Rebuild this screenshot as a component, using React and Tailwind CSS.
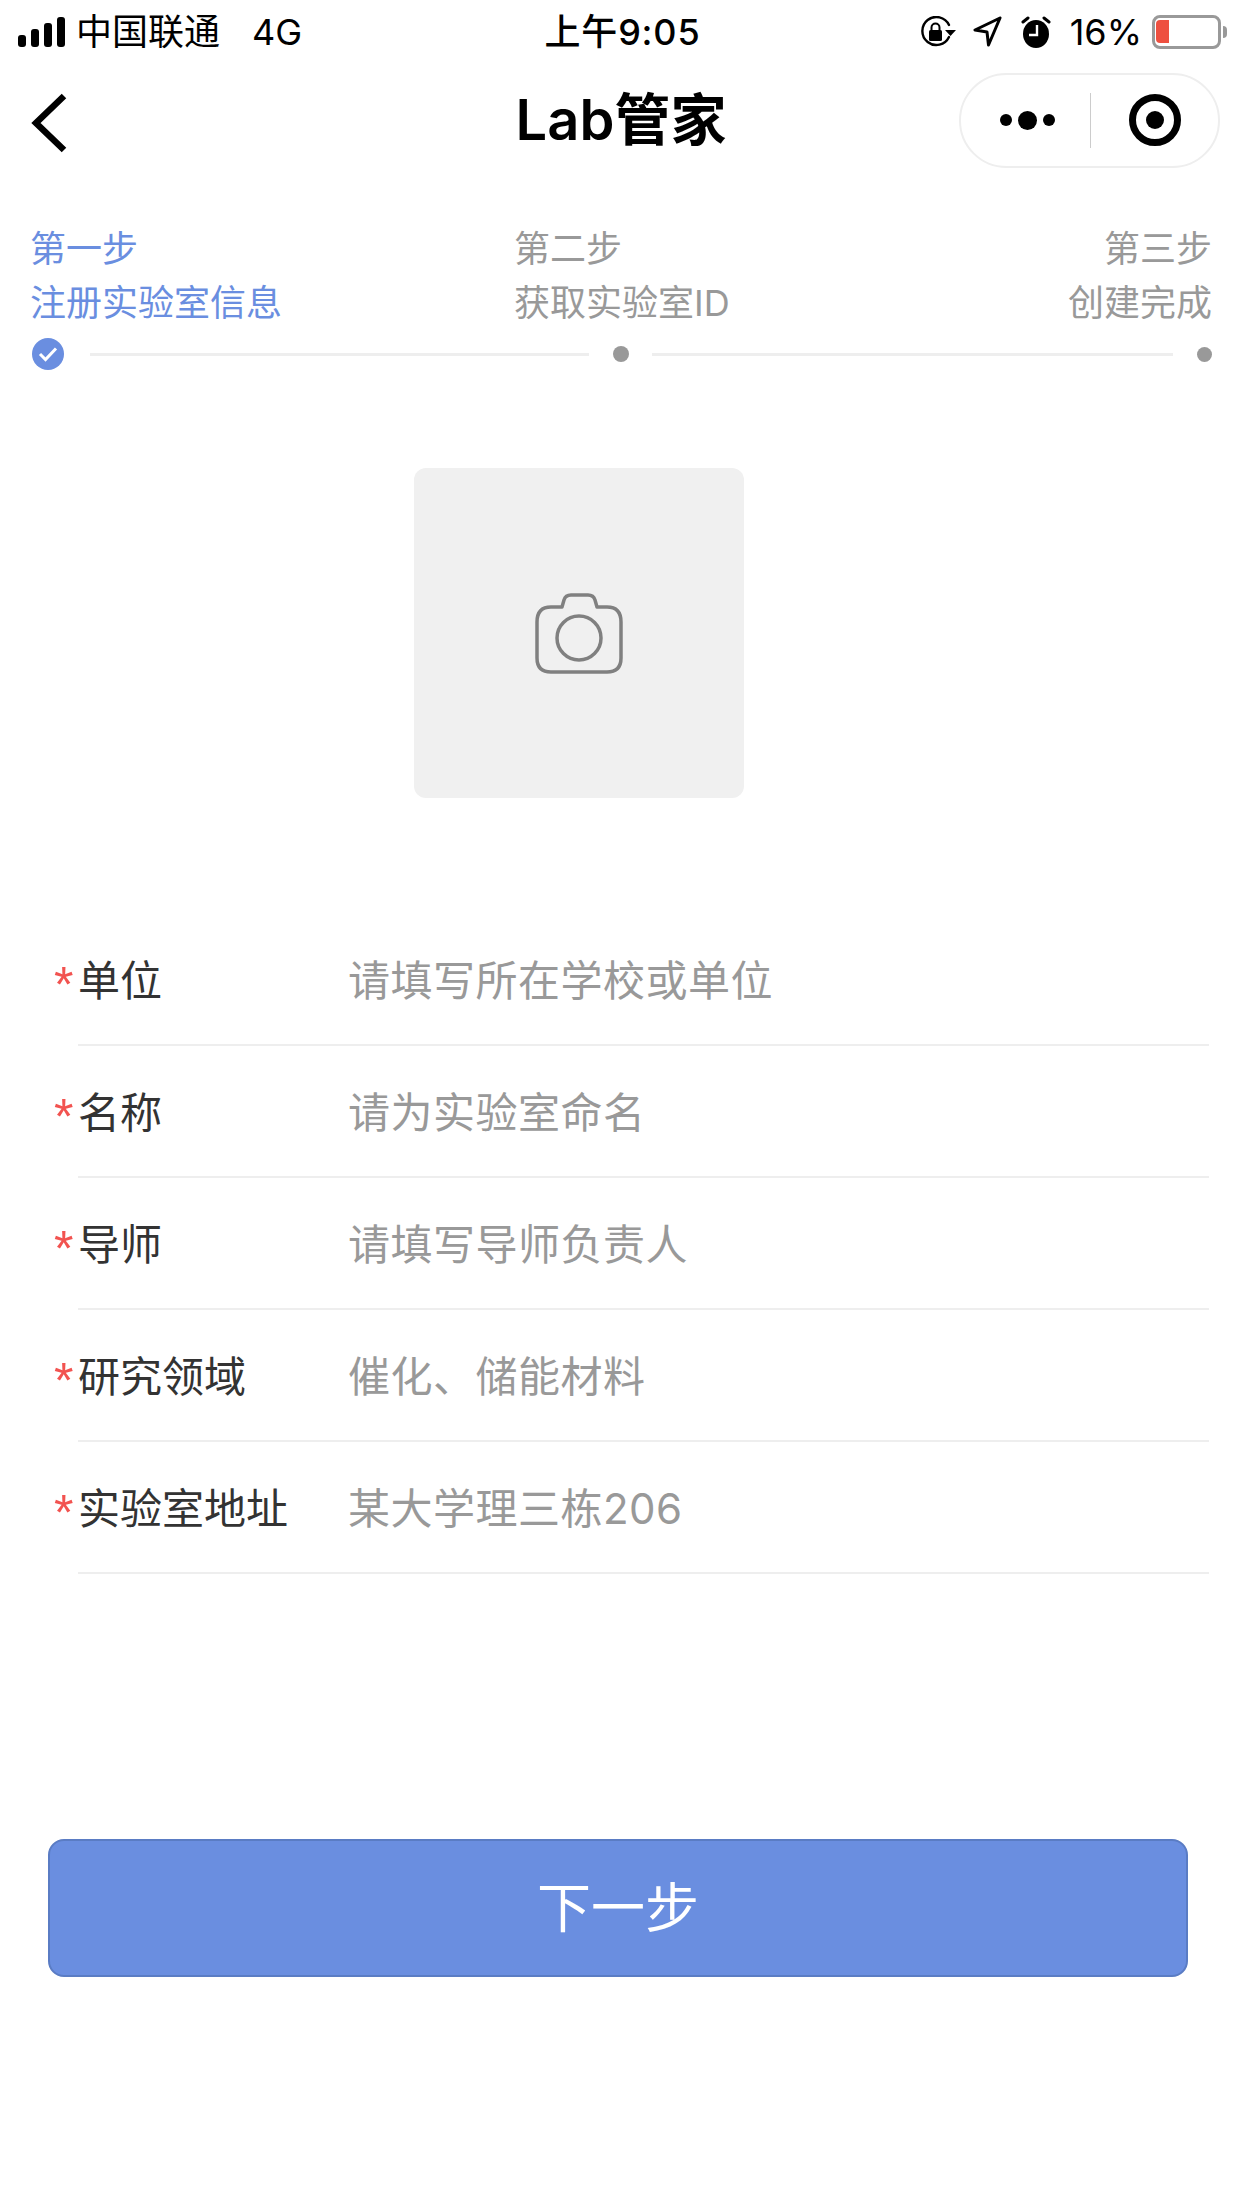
import React from "react";

const fontStack = { fontFamily: '"Inter", "Noto Sans CJK SC", sans-serif' };

const rows = [
  { label: "单位", hint: "请填写所在学校或单位" },
  { label: "名称", hint: "请为实验室命名" },
  { label: "导师", hint: "请填写导师负责人" },
  { label: "研究领域", hint: "催化、储能材料" },
  { label: "实验室地址", hint: "某大学理三栋206" },
];

function SignalBars() {
  return (
    <svg width="47" height="30" viewBox="0 0 47 30" fill="#000">
      <rect x="0" y="18" width="8" height="12" rx="3" />
      <rect x="13" y="12" width="8" height="18" rx="3" />
      <rect x="26" y="6" width="8" height="24" rx="3" />
      <rect x="39" y="0" width="8" height="30" rx="3" />
    </svg>
  );
}

function RotationLock() {
  return (
    <svg width="36" height="32" viewBox="0 0 36 32" fill="none">
      <path d="M29 21A14 14 0 1 1 29 9" stroke="#000" strokeWidth="2.400" strokeLinecap="round" />
      <path d="M25 14h11l-5.500 6z" fill="#000" />
      <rect x="9" y="14" width="13" height="11" rx="1.500" fill="#000" />
      <path d="M11.500 14v-2.500a4 4 0 0 1 8 0V14" stroke="#000" strokeWidth="2" />
    </svg>
  );
}

function LocationArrow() {
  return (
    <svg width="29" height="31" viewBox="0 0 29 31" fill="none">
      <path d="M27 2 2 14l12 2 1.500 13z" stroke="#000" strokeWidth="3" strokeLinejoin="round" />
    </svg>
  );
}

function AlarmClock() {
  return (
    <svg width="30" height="32" viewBox="0 0 30 32" fill="none">
      <ellipse cx="15" cy="18" rx="13" ry="14" fill="#000" />
      <path d="M2 6 7 2M28 6l-5-4" stroke="#000" strokeWidth="3" strokeLinecap="round" />
      <path d="M16 9v10H8" stroke="#fff" strokeWidth="2.400" />
    </svg>
  );
}

function Battery() {
  return (
    <div className="flex items-center">
      <div className="flex h-[34px] w-[69px] items-center rounded-[8px] border-[3px] border-[#999] pl-[1px]">
        <div className="h-[23px] w-[13px] rounded-l-[4px] bg-[#ee5040]" />
      </div>
      <div className="ml-[2px] h-[12px] w-[4px] rounded-r-full bg-[#999]" />
    </div>
  );
}

function CameraIcon() {
  return (
    <svg width="88" height="81" viewBox="0 0 88 81" fill="none" stroke="#808080" strokeWidth="3.500">
      <path d="M16 14h11l2-7q1.500-5 7-5h17q5.500 0 7 5l2 7h10q14 0 14 15v36q0 14-14 14H16Q2 79 2 65V29q0-15 14-15z" strokeLinejoin="round" />
      <circle cx="44" cy="45" r="22" />
    </svg>
  );
}

export default function App() {
  return (
    <div className="h-[2208px] w-[1242px] overflow-hidden bg-white" style={fontStack}>
      {/* status bar */}
      <div className="grid h-[62px] grid-cols-[1fr_auto_1fr] items-center pt-[1px] text-[36px] text-black">
        <div className="flex items-center pl-[18px]">
          <SignalBars />
          <span className="ml-[11px]">中国联通</span>
          <span className="ml-[32px]">4G</span>
        </div>
        <div className="pl-[3px] font-medium tracking-[0.800px]">上午9:05</div>
        <div className="flex items-center justify-end pr-[15px]">
          <RotationLock />
          <div className="ml-[17px]"><LocationArrow /></div>
          <div className="ml-[19px]"><AlarmClock /></div>
          <span className="ml-[19px]">16%</span>
          <div className="ml-[10px]"><Battery /></div>
        </div>
      </div>

      {/* nav bar */}
      <div className="grid h-[116px] grid-cols-[1fr_auto_1fr] items-center">
        <div className="pl-[30px] pt-[6px]">
          <svg width="38" height="60" viewBox="0 0 38 60" fill="none" stroke="#000" strokeWidth="6.500">
            <path d="M34 3 6 30l28 27" />
          </svg>
        </div>
        <div className="pb-[1px] text-[56px] font-semibold text-black">Lab管家</div>
        <div className="flex justify-end pr-[22px]">
          <div className="flex h-[95px] w-[261px] items-center rounded-full border-2 border-[#eee]">
            <div className="flex w-[129px] items-center justify-center gap-[6px] pl-[4px]">
              <div className="h-[12px] w-[12px] rounded-full bg-black" />
              <div className="h-[19px] w-[19px] rounded-full bg-black" />
              <div className="h-[12px] w-[12px] rounded-full bg-black" />
            </div>
            <div className="h-[55px] w-[1px] bg-[#ccc]" />
            <div className="flex flex-1 justify-center">
              <div className="flex h-[52px] w-[52px] items-center justify-center rounded-full border-[7px] border-black">
                <div className="h-[18px] w-[18px] rounded-full bg-black" />
              </div>
            </div>
          </div>
        </div>
      </div>

      {/* steps */}
      <div className="pl-[32px] pr-[30px] pt-[44px]">
        <div className="-ml-[2px] grid grid-cols-[484px_1fr_auto] text-[36px] leading-[54px] text-[#999]">
          <div className="text-[#6a8ee0]">
            <div>第一步</div>
            <div>注册实验室信息</div>
          </div>
          <div>
            <div>第二步</div>
            <div>获取实验室ID</div>
          </div>
          <div className="text-right">
            <div>第三步</div>
            <div>创建完成</div>
          </div>
        </div>
        <div className="mt-[8px] flex h-[32px] items-center">
          <div className="flex h-[32px] w-[32px] items-center justify-center rounded-full bg-[#6a8ee0]">
            <svg width="20" height="16" viewBox="0 0 20 16" fill="none" stroke="#fff" strokeWidth="3">
              <path d="m2 8 5.500 5.500L18 2.500" />
            </svg>
          </div>
          <div className="ml-[26px] h-[3px] w-[499px] bg-[#eee]" />
          <div className="ml-[24px] h-[16px] w-[16px] rounded-full bg-[#999]" />
          <div className="ml-[23px] h-[3px] w-[522px] bg-[#eee]" />
          <div className="ml-[24px] h-[15px] w-[15px] rounded-full bg-[#999]" />
        </div>
      </div>

      {/* photo picker */}
      <div className="ml-[414px] mt-[98px] flex h-[330px] w-[330px] items-center justify-center rounded-[12px] bg-[#f0f0f0]">
        <CameraIcon />
      </div>

      {/* form */}
      <div className="mt-[116px] pr-[33px]">
        {rows.map((row) => (
          <div key={row.label} className="flex h-[132px] pl-[54px] text-[42px]">
            <span className="w-[24px] pt-[41px] font-['Liberation_Sans'] text-[50px] leading-[60px] text-[#f25350]">*</span>
            <div className="flex flex-1 items-center border-b-2 border-[#eee] pt-[2px]">
              <span className="w-[270px] text-[#333]">{row.label}</span>
              <span className="tracking-[0.500px] text-[#999]">{row.hint}</span>
            </div>
          </div>
        ))}
      </div>

      {/* next button */}
      <div className="ml-[48px] mt-[265px] flex h-[138px] w-[1140px] items-center justify-center rounded-[16px] border-2 border-[#5a7cc4] bg-[#6a8ee0] text-[54px] text-white">
        下一步
      </div>
    </div>
  );
}
